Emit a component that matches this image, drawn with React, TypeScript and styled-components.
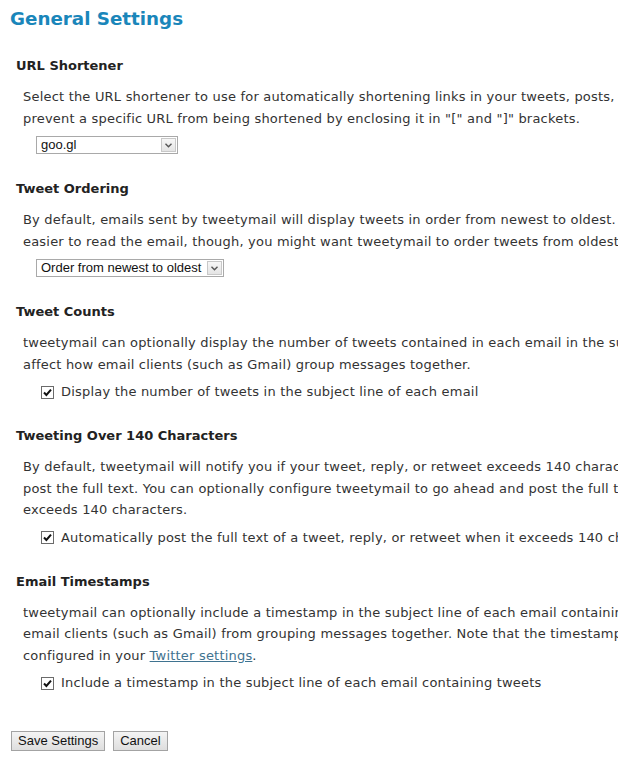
import React, { useState } from 'react';
import styled, { createGlobalStyle } from 'styled-components';

const GlobalStyle = createGlobalStyle`
  html, body {
    margin: 0;
    padding: 0;
    background: #fff;
    overflow: hidden;
  }
  body {
    font-family: "DejaVu Sans", Verdana, sans-serif;
    color: #333;
  }
`;

const App: React.FC<{}> = () => {
  const [shortener, setShortener] = useState<string>('goo.gl');
  const [ordering, setOrdering] = useState<string>('newest');
  const [counts, setCounts] = useState<boolean>(true);
  const [fullText, setFullText] = useState<boolean>(true);
  const [timestamps, setTimestamps] = useState<boolean>(true);

  return (
    <Page>
      <GlobalStyle />
      <Title>General Settings</Title>

      <Heading>URL Shortener</Heading>
      <Text>
        Select the URL shortener to use for automatically shortening links in your tweets, posts, and
        <br />
        prevent a specific URL from being shortened by enclosing it in "[" and "]" brackets.
      </Text>
      <Field>
        <SelectBox>
          <Select value={shortener} onChange={(e) => setShortener(e.target.value)} style={{ width: 124 }}>
            <option value="goo.gl">goo.gl</option>
            <option value="bit.ly">bit.ly</option>
            <option value="none">None</option>
          </Select>
          <Arrow />
        </SelectBox>
      </Field>

      <Heading>Tweet Ordering</Heading>
      <Text>
        By default, emails sent by tweetymail will display tweets in order from newest to oldest. If
        <br />
        easier to read the email, though, you might want tweetymail to order tweets from oldest to
      </Text>
      <Field>
        <SelectBox>
          <Select value={ordering} onChange={(e) => setOrdering(e.target.value)} style={{ width: 170 }}>
            <option value="newest">Order from newest to oldest</option>
            <option value="oldest">Order from oldest to newest</option>
          </Select>
          <Arrow />
        </SelectBox>
      </Field>

      <Heading>Tweet Counts</Heading>
      <Text>
        tweetymail can optionally display the number of tweets contained in each email in the subject
        <br />
        affect how email clients (such as Gmail) group messages together.
      </Text>
      <CheckRow onClick={() => setCounts(!counts)}>
        <Check checked={counts} />
        Display the number of tweets in the subject line of each email
      </CheckRow>

      <Heading>Tweeting Over 140 Characters</Heading>
      <Text>
        By default, tweetymail will notify you if your tweet, reply, or retweet exceeds 140 characters
        <br />
        post the full text. You can optionally configure tweetymail to go ahead and post the full text
        <br />
        exceeds 140 characters.
      </Text>
      <CheckRow onClick={() => setFullText(!fullText)}>
        <Check checked={fullText} />
        Automatically post the full text of a tweet, reply, or retweet when it exceeds 140 characters
      </CheckRow>

      <Heading>Email Timestamps</Heading>
      <Text>
        tweetymail can optionally include a timestamp in the subject line of each email containing
        <br />
        email clients (such as Gmail) from grouping messages together. Note that the timestamp
        <br />
        configured in your <Link href="#">Twitter settings</Link>.
      </Text>
      <CheckRow onClick={() => setTimestamps(!timestamps)}>
        <Check checked={timestamps} />
        Include a timestamp in the subject line of each email containing tweets
      </CheckRow>

      <Buttons>
        <Button>Save Settings</Button>
        <Button>Cancel</Button>
      </Buttons>
    </Page>
  );
};

const Check: React.FC<{ checked: boolean }> = ({ checked }) => (
  <Box>
    {checked && (
      <svg width="9" height="9" viewBox="0 0 9 9">
        <path d="M1 4.5 L3.4 7 L8 1.6" fill="none" stroke="#111" strokeWidth="2" />
      </svg>
    )}
  </Box>
);

export default App;

const Page = styled.div`
  width: 618px;
  padding: 8px 0 0 10px;
  box-sizing: border-box;
  overflow: hidden;
`;

const Title = styled.h1`
  margin: 0 0 26px;
  font-size: 18.3px;
  line-height: 22px;
  font-weight: bold;
  color: #1a86ba;
`;

const Heading = styled.h3`
  margin: 0 0 10px 6px;
  font-size: 13px;
  line-height: 20px;
  font-weight: bold;
  color: #222;
`;

const Text = styled.p`
  margin: 0 0 6px 13px;
  font-size: 13px;
  letter-spacing: 0.2px;
  line-height: 21.5px;
  white-space: nowrap;
  color: #333;
`;

const Field = styled.div`
  margin: 0 0 24px 26px;
  height: 20px;
  display: flex;
  align-items: center;
`;

const SelectBox = styled.div`
  display: inline-flex;
  align-items: center;
  height: 18px;
  box-sizing: border-box;
  border: 1px solid #a9a9a9;
  background: #fff;
`;

const Select = styled.select`
  appearance: none;
  border: none;
  outline: none;
  background: transparent;
  font-family: "Liberation Sans", Arial, sans-serif;
  font-size: 13px;
  color: #111;
  height: 16px;
  line-height: 16px;
  padding: 0 0 0 4px;
  margin: 0;
`;

const ArrowBox = styled.span`
  width: 15px;
  height: 14px;
  margin-right: 1px;
  box-sizing: border-box;
  border: 1px solid #c8c8c8;
  background: linear-gradient(#f7f7f7, #e4e4e4);
  display: flex;
  align-items: center;
  justify-content: center;
`;

const Arrow: React.FC<{}> = () => (
  <ArrowBox>
    <svg width="7" height="5" viewBox="0 0 7 5">
      <path d="M0.5 0.8 L3.5 3.8 L6.5 0.8" fill="none" stroke="#555" strokeWidth="1.4" />
    </svg>
  </ArrowBox>
);

const CheckRow = styled.label`
  margin: 7px 0 24px 31px;
  display: flex;
  align-items: center;
  gap: 7px;
  font-size: 13px;
  letter-spacing: 0.2px;
  line-height: 20px;
  white-space: nowrap;
  color: #333;
  cursor: pointer;
`;

const Box = styled.span`
  width: 13px;
  height: 13px;
  box-sizing: border-box;
  border: 1px solid #6b6b6b;
  background: #fff;
  display: flex;
  align-items: center;
  justify-content: center;
  flex: none;
`;

const Link = styled.a`
  color: #3f7390;
  text-decoration: underline;
`;

const Buttons = styled.div`
  margin-top: 38px;
  display: flex;
  gap: 8px;
  padding-left: 1px;
`;

const Button = styled.button`
  font-family: "Liberation Sans", Arial, sans-serif;
  font-size: 13px;
  color: #111;
  height: 20px;
  padding: 0 6px;
  border: 1px solid #a3a3a3;
  background: linear-gradient(#f4f4f4, #dedede);
  border-radius: 0;
  line-height: 18px;
`;
